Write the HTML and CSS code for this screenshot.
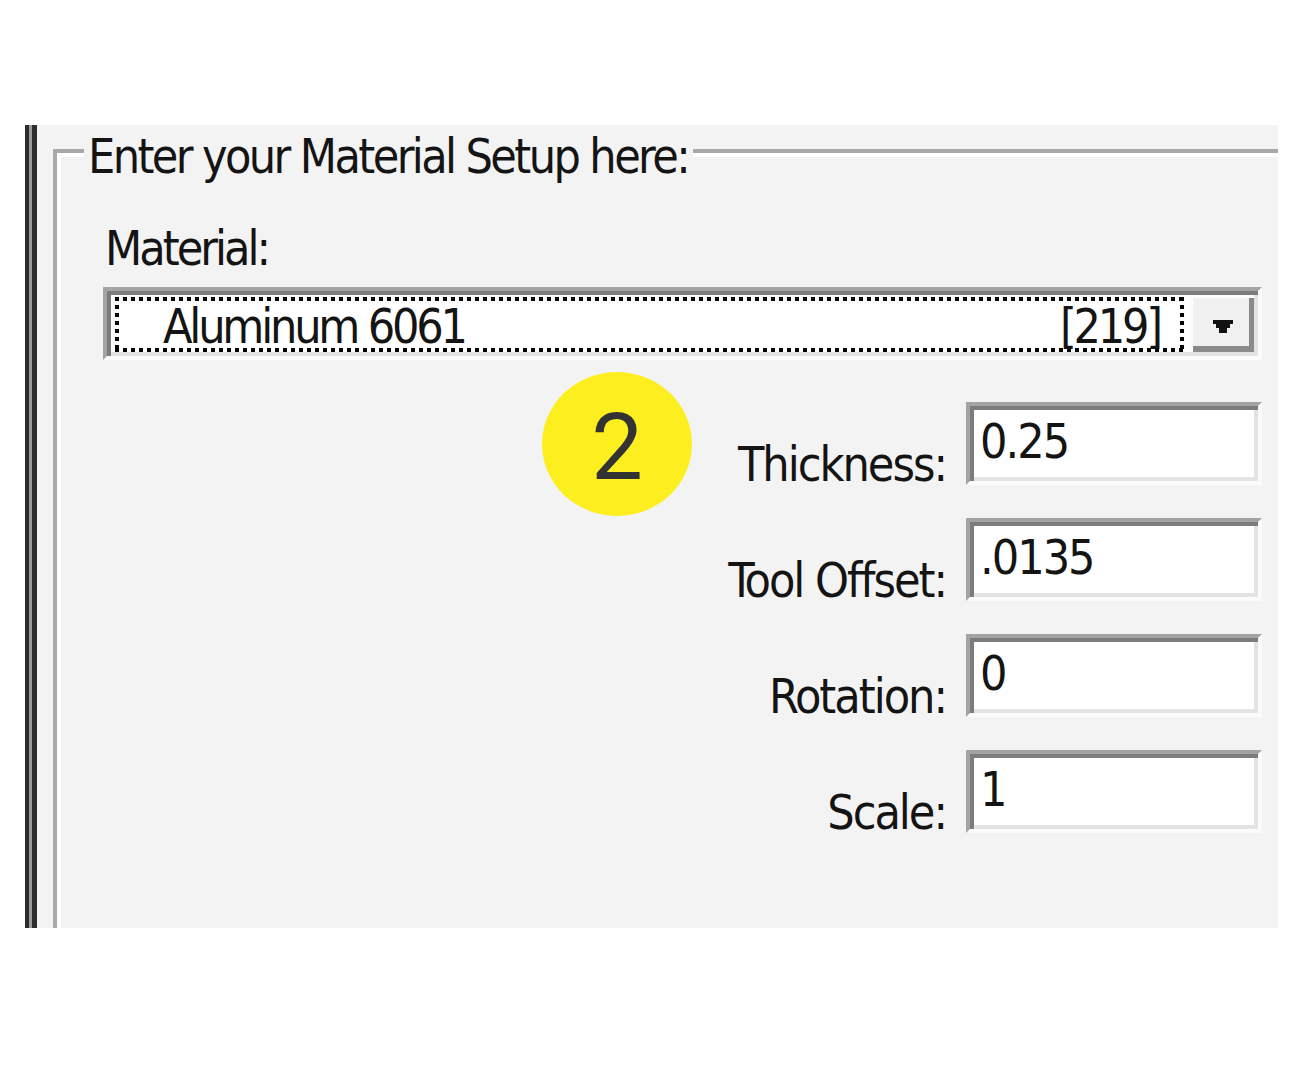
FILE: index.html
```html
<!DOCTYPE html>
<html>
<head>
<meta charset="utf-8">
<link rel="stylesheet" href="styles.css">
</head>
<body>
<div class="panel">
  <div class="edge"></div>
  <div class="group">
    <span class="group-title">Enter your Material Setup here:</span>
    <div class="label">Material:</div>
    <div class="combo">
      <div class="combo-field"><span>Aluminum 6061</span><span>[219]</span></div>
      <div class="combo-btn">
        <svg width="20" height="13" viewBox="0 0 20 13"><path d="M0 0H20V4H17V8H14V13H6V8H3V4H0Z" fill="#111"/></svg>
      </div>
    </div>
    <div class="fields">
      <div class="row"><span class="row-label">Thickness:</span><div class="box">0.25</div></div>
      <div class="row"><span class="row-label">Tool Offset:</span><div class="box">.0135</div></div>
      <div class="row"><span class="row-label">Rotation:</span><div class="box">0</div></div>
      <div class="row"><span class="row-label">Scale:</span><div class="box">1</div></div>
    </div>
    <div class="badge">2</div>
  </div>
</div>
</body>
</html>
```
FILE: styles.css
```css
html, body {
  margin: 0;
  background: #fff;
}
body {
  font-family: "DejaVu Sans Condensed", "Liberation Sans", Arial, sans-serif;
  color: #141414;
  font-size: 48px;
  line-height: 50px;
  letter-spacing: -2px;
}
.panel {
  margin: 125px 0 0 25px;
  width: 1253px;
  height: 803px;
  background: #f3f3f3;
  display: flex;
  overflow: hidden;
}
.edge {
  flex: none;
  width: 12px;
  background: linear-gradient(90deg, #2d2d2d 0 4px, #9a9a9a 4px 7px, #2d2d2d 7px 12px);
}
.group {
  flex: 1;
  position: relative;
  margin: 24px 0 0 16px;
  border-top: 4px solid #a8a8a8;
  border-left: 4px solid #a8a8a8;
  box-shadow: inset 4px 4px 0 #fff;
  padding: 70px 16px 0 46px;
}
.group-title {
  position: absolute;
  left: 27px;
  top: -22px;
  padding: 0 5px 0 4px;
  background: #f3f3f3;
  white-space: nowrap;
  letter-spacing: -2.6px;
}
.label {
  white-space: nowrap;
  padding-left: 2px;
  letter-spacing: -3px;
}
.combo {
  margin-top: 14px;
  height: 73px;
  box-sizing: border-box;
  border: 4px solid;
  border-color: #a3a3a3 #fbfbfb #fbfbfb #a3a3a3;
  box-shadow: inset 4px 4px 0 #7c7c7c, inset -4px -4px 0 #e3e3e3;
  background: #fff;
  padding: 4px;
  display: flex;
}
.combo-field {
  flex: 1;
  margin: 2px 6px 0 4px;
  padding: 2px 24px 0 48px;
  display: flex;
  align-items: center;
  justify-content: space-between;
  white-space: nowrap;
  letter-spacing: -3.2px;
  background:
    linear-gradient(90deg, #000 50%, transparent 0) top left / 8px 4px repeat-x,
    linear-gradient(90deg, #000 50%, transparent 0) bottom left / 8px 4px repeat-x,
    linear-gradient(#000 50%, transparent 0) top left / 4px 8px repeat-y,
    linear-gradient(#000 50%, transparent 0) top right / 4px 8px repeat-y;
}
.combo-btn {
  flex: none;
  width: 64px;
  box-sizing: border-box;
  background: #f0f0f0;
  box-shadow: inset 3px 3px 0 #fdfdfd, inset -5px -6px 0 #8a8a8a;
  display: flex;
  align-items: center;
  justify-content: center;
  padding: 6px 2px 0 4px;
}
.combo-btn svg {
  display: block;
}
.fields {
  margin-top: 42px;
  display: flex;
  flex-direction: column;
  align-items: flex-end;
  gap: 33px;
}
.row {
  display: flex;
  align-items: flex-end;
  gap: 20px;
}
.row-label {
  line-height: 42px;
  white-space: nowrap;
}
.box {
  width: 296px;
  height: 83px;
  box-sizing: border-box;
  background: #fff;
  border: 4px solid;
  border-color: #a3a3a3 #fbfbfb #fbfbfb #a3a3a3;
  box-shadow: inset 4px 4px 0 #7c7c7c, inset -4px -4px 0 #e3e3e3;
  padding: 10px 8px 0 10px;
}
.badge {
  position: absolute;
  left: 485px;
  top: 219px;
  width: 150px;
  height: 144px;
  border-radius: 50%;
  background: #fdef1f;
  display: flex;
  align-items: center;
  justify-content: center;
  box-sizing: border-box;
  padding-top: 8px;
  font-family: Roboto, "Liberation Sans", sans-serif;
  font-size: 92px;
  line-height: 92px;
  letter-spacing: 0;
  color: #333;
}
```
